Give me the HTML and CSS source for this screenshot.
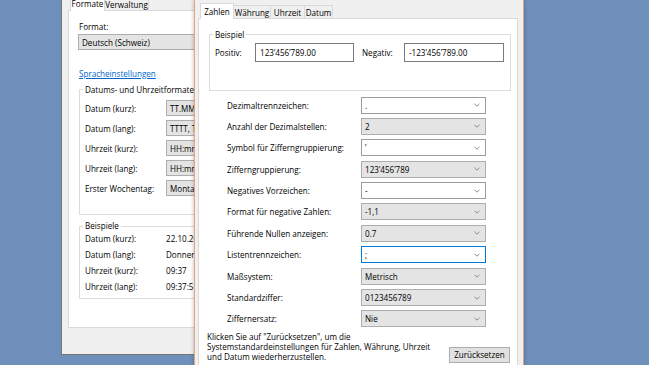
FILE: index.html
```html
<!DOCTYPE html>
<html lang="de">
<head>
  <meta charset="UTF-8">
  <meta name="viewport" content="width=device-width, initial-scale=1.0">
  <title>Region</title>
  <link rel="stylesheet" href="styles.css">
</head>
<body>
  <div class="desk">

    <div class="win back">
      <div class="tabs">
        <span class="tab on w-formate">Formate</span>
        <span class="tab w-verw">Verwaltung</span>
      </div>
      <div class="panel back-panel">
        <div class="fmt-lbl">Format:</div>
        <div class="combo gray wide">Deutsch (Schweiz)</div>
        <a class="link">Spracheinstellungen</a>

        <fieldset class="grp grp-formats">
          <legend>Datums- und Uhrzeitformate</legend>
          <div class="back-rows">
            <span>Datum (kurz):</span><div class="combo gray">TT.MM.JJJJ</div>
            <span>Datum (lang):</span><div class="combo gray">TTTT, T. MMMM JJJJ</div>
            <span>Uhrzeit (kurz):</span><div class="combo gray">HH:mm</div>
            <span>Uhrzeit (lang):</span><div class="combo gray">HH:mm:ss</div>
            <span>Erster Wochentag:</span><div class="combo gray">Montag</div>
          </div>
        </fieldset>

        <fieldset class="grp grp-samples">
          <legend>Beispiele</legend>
          <div class="sample-rows">
            <span>Datum (kurz):</span><span>22.10.2015</span>
            <span>Datum (lang):</span><span>Donnerstag, 22. Oktober 2015</span>
            <span>Uhrzeit (kurz):</span><span>09:37</span>
            <span>Uhrzeit (lang):</span><span>09:37:51</span>
          </div>
        </fieldset>
      </div>
    </div>

    <div class="win front">
      <div class="tabs">
        <span class="tab on w-zahlen">Zahlen</span>
        <span class="tab w-waehrung">Währung</span>
        <span class="tab w-uhrzeit">Uhrzeit</span>
        <span class="tab w-datum">Datum</span>
      </div>
      <div class="panel front-panel">
        <fieldset class="grp grp-example">
          <legend>Beispiel</legend>
          <div class="ex-row">
            <span class="ex-lbl">Positiv:</span>
            <div class="field">123’456’789.00</div>
            <span class="ex-lbl neg">Negativ:</span>
            <div class="field wide-field">-123’456’789.00</div>
          </div>
        </fieldset>

        <div class="settings">
          <span>Dezimaltrennzeichen:</span>
          <div class="combo edit"><span>.</span><svg class="chev" width="6" height="4" viewBox="0 0 6 4"><polyline points="0.5,0.8 3,3.2 5.5,0.8"/></svg></div>
          <span>Anzahl der Dezimalstellen:</span>
          <div class="combo gray"><span>2</span><svg class="chev" width="6" height="4" viewBox="0 0 6 4"><polyline points="0.5,0.8 3,3.2 5.5,0.8"/></svg></div>
          <span>Symbol für Zifferngruppierung:</span>
          <div class="combo edit"><span>’</span><svg class="chev" width="6" height="4" viewBox="0 0 6 4"><polyline points="0.5,0.8 3,3.2 5.5,0.8"/></svg></div>
          <span>Zifferngruppierung:</span>
          <div class="combo gray"><span>123’456’789</span><svg class="chev" width="6" height="4" viewBox="0 0 6 4"><polyline points="0.5,0.8 3,3.2 5.5,0.8"/></svg></div>
          <span>Negatives Vorzeichen:</span>
          <div class="combo edit"><span>-</span><svg class="chev" width="6" height="4" viewBox="0 0 6 4"><polyline points="0.5,0.8 3,3.2 5.5,0.8"/></svg></div>
          <span>Format für negative Zahlen:</span>
          <div class="combo gray"><span>-1,1</span><svg class="chev" width="6" height="4" viewBox="0 0 6 4"><polyline points="0.5,0.8 3,3.2 5.5,0.8"/></svg></div>
          <span>Führende Nullen anzeigen:</span>
          <div class="combo gray"><span>0.7</span><svg class="chev" width="6" height="4" viewBox="0 0 6 4"><polyline points="0.5,0.8 3,3.2 5.5,0.8"/></svg></div>
          <span>Listentrennzeichen:</span>
          <div class="combo edit focus"><span>;</span><svg class="chev" width="6" height="4" viewBox="0 0 6 4"><polyline points="0.5,0.8 3,3.2 5.5,0.8"/></svg></div>
          <span>Maßsystem:</span>
          <div class="combo gray"><span>Metrisch</span><svg class="chev" width="6" height="4" viewBox="0 0 6 4"><polyline points="0.5,0.8 3,3.2 5.5,0.8"/></svg></div>
          <span>Standardziffer:</span>
          <div class="combo gray"><span>0123456789</span><svg class="chev" width="6" height="4" viewBox="0 0 6 4"><polyline points="0.5,0.8 3,3.2 5.5,0.8"/></svg></div>
          <span>Ziffernersatz:</span>
          <div class="combo gray"><span>Nie</span><svg class="chev" width="6" height="4" viewBox="0 0 6 4"><polyline points="0.5,0.8 3,3.2 5.5,0.8"/></svg></div>
        </div>

        <div class="foot">
          <p class="hint">Klicken Sie auf "Zurücksetzen", um die<br>Systemstandardeinstellungen für Zahlen, Währung, Uhrzeit<br>und Datum wiederherzustellen.</p>
          <button class="btn">Zurücksetzen</button>
        </div>
      </div>
    </div>

  </div>
</body>
</html>
```

FILE: styles.css
```css
body { margin: 0; background: #7090bc; font-family: "Open Sans", "Segoe UI", sans-serif; font-size: 8.1px; color: #000; }
.desk { position: relative; width: 649px; height: 365px; overflow: hidden; }

/* windows on the desktop */
.win { position: absolute; box-sizing: border-box; background: #f0f0f0; padding-top: 3px; }
.back { left: 61px; top: -8px; width: 220px; height: 363px; border: 1px solid #767676; border-top: none; padding-left: 6px; }
.front { left: 194px; top: 0; width: 330px; height: 372px; border: 1px solid #eaa47c; border-top: none; padding: 3px 5px 0 3px; box-shadow: 0 0 4px rgba(0, 0, 0, 0.28); z-index: 2; }

/* tabs */
.tabs { display: flex; align-items: flex-end; height: 16px; padding-left: 2px; margin-bottom: -1px; position: relative; z-index: 1; }
.tab { box-sizing: border-box; height: 13px; margin-bottom: 1px; margin-left: -1px; border: 1px solid #d9d9d9; border-bottom: none; background: #f0f0f0; display: flex; align-items: center; justify-content: center; line-height: 11px; }
.tab:first-child { margin-left: 0; }
.tab.on { height: 16px; margin-bottom: 0; background: #fff; }
.w-formate { width: 35px; }
.w-verw { width: 45px; }
.w-zahlen { width: 34px; }
.w-waehrung { width: 38px; }
.w-uhrzeit { width: 35px; }
.w-datum { width: 29px; }

.panel { box-sizing: border-box; border: 1px solid #d9d9d9; background: #fff; }

/* group boxes */
.grp { border: 1px solid #dcdcdc; margin: 0; min-width: 0; }
.grp legend { padding: 0 2px; margin-left: -2px; line-height: 11px; }

/* combo boxes */
.combo { box-sizing: border-box; height: 16px; border: 1px solid #adadad; display: flex; align-items: center; justify-content: space-between; padding: 0 5px 0 3px; white-space: nowrap; overflow: hidden; line-height: 11px; }
.combo.gray { background: #e4e4e4; }
.combo.edit { background: #fff; border-color: #9c9c9c; }
.combo.focus { border-color: #0078d7; }
.chev { flex: none; }
.chev polyline { fill: none; stroke: #8a8a8a; stroke-width: 1; }

/* back window: Formate */
.back-panel { height: 318px; padding-left: 9px; }
.fmt-lbl { margin-top: 9.5px; line-height: 11px; padding-left: 1px; }
.combo.wide { width: 200px; margin-top: 2.5px; }
.link { display: block; margin-top: 17.5px; line-height: 11px; padding-left: 1px; color: #0066cc; text-decoration: underline; }
.grp-formats { margin: 5px 0 0 1px; padding: 5.5px 0 18px 5px; }
.back-rows { display: grid; grid-template-columns: 81px 200px; grid-auto-rows: 16px; row-gap: 4px; align-items: center; line-height: 11px; }
.grp-samples { margin: 6px 0 0 1px; padding: 0 0 4px 5px; }
.grp-samples legend { line-height: 10px; }
.sample-rows { display: grid; grid-template-columns: 81px 200px; grid-auto-rows: 16.1px; align-items: center; margin-top: -1px; white-space: nowrap; line-height: 11px; }

/* front window: Zahlen */
.front-panel { height: 360px; }
.grp-example { margin: 9.5px 6px 0 10px; padding: 3.5px 0 28px 5px; }
.ex-row { display: flex; align-items: center; }
.ex-lbl { width: 40px; }
.ex-lbl.neg { width: 42px; margin-left: 8px; }
.field { box-sizing: border-box; width: 99px; height: 19px; border: 1px solid #7a7a7a; background: #fff; padding-left: 4px; display: flex; align-items: center; }
.field.wide-field { width: 100px; }

.settings { display: grid; grid-template-columns: 134px 125px; grid-auto-rows: 17px; row-gap: 4.4px; align-items: center; margin: 5.5px 0 0 28px; line-height: 11px; }
.settings .combo { height: 17px; }

.foot { display: flex; justify-content: space-between; align-items: flex-end; margin-top: 4.3px; padding: 0 7px 0 8px; }
.hint { margin: 0; line-height: 10.3px; }
.btn { box-sizing: border-box; width: 61px; height: 16px; padding: 0; border: 1px solid #adadad; background: #e1e1e1; font: inherit; color: inherit; }
```
